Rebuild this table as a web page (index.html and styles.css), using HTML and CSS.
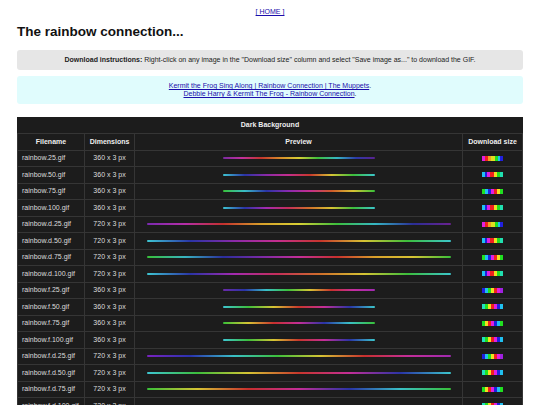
FILE: index.html
```html
<!DOCTYPE html>
<html lang="en">
<head>
  <meta charset="UTF-8">
  <meta name="viewport" content="width=device-width, initial-scale=1.0">
  <title>The rainbow connection...</title>
  <link rel="stylesheet" href="styles.css">
</head>
<body>
  <p class="nav"><a href="#">[ HOME ]</a></p>

  <h1>The rainbow connection...</h1>

  <div class="note instructions">
    <strong>Download instructions:</strong> Right-click on any image in the "Download size" column and select "Save image as..." to download the GIF.
  </div>

  <div class="note links">
    <a href="#">Kermit the Frog Sing Along | Rainbow Connection | The Muppets</a>.<br>
    <a href="#">Debbie Harry &amp; Kermit The Frog - Rainbow Connection</a>.
  </div>

  <table class="gallery">
    <tr class="caption-row">
      <th colspan="4">Dark Background</th>
    </tr>
    <tr class="head-row">
      <th class="col-name">Filename</th>
      <th class="col-dim">Dimensions</th>
      <th class="col-preview">Preview</th>
      <th class="col-dl">Download size</th>
    </tr>
    <tr>
      <td>rainbow.25.gif</td><td class="dim">360 x 3 px</td>
      <td class="preview"><div class="line short h25"></div></td>
      <td class="dl"><div class="thumb t25"></div></td>
    </tr>
    <tr>
      <td>rainbow.50.gif</td><td class="dim">360 x 3 px</td>
      <td class="preview"><div class="line short h50"></div></td>
      <td class="dl"><div class="thumb t50"></div></td>
    </tr>
    <tr>
      <td>rainbow.75.gif</td><td class="dim">360 x 3 px</td>
      <td class="preview"><div class="line short h75"></div></td>
      <td class="dl"><div class="thumb t75"></div></td>
    </tr>
    <tr>
      <td>rainbow.100.gif</td><td class="dim">360 x 3 px</td>
      <td class="preview"><div class="line short h100"></div></td>
      <td class="dl"><div class="thumb t50"></div></td>
    </tr>
    <tr>
      <td>rainbow.d.25.gif</td><td class="dim">720 x 3 px</td>
      <td class="preview"><div class="line long d25"></div></td>
      <td class="dl"><div class="thumb t25"></div></td>
    </tr>
    <tr>
      <td>rainbow.d.50.gif</td><td class="dim">720 x 3 px</td>
      <td class="preview"><div class="line long h50"></div></td>
      <td class="dl"><div class="thumb t50"></div></td>
    </tr>
    <tr>
      <td>rainbow.d.75.gif</td><td class="dim">720 x 3 px</td>
      <td class="preview"><div class="line long d75"></div></td>
      <td class="dl"><div class="thumb t75"></div></td>
    </tr>
    <tr>
      <td>rainbow.d.100.gif</td><td class="dim">720 x 3 px</td>
      <td class="preview"><div class="line long h100"></div></td>
      <td class="dl"><div class="thumb t50"></div></td>
    </tr>
    <tr>
      <td>rainbow.f.25.gif</td><td class="dim">360 x 3 px</td>
      <td class="preview"><div class="line short f25"></div></td>
      <td class="dl"><div class="thumb tf25"></div></td>
    </tr>
    <tr>
      <td>rainbow.f.50.gif</td><td class="dim">360 x 3 px</td>
      <td class="preview"><div class="line short f50"></div></td>
      <td class="dl"><div class="thumb tf50"></div></td>
    </tr>
    <tr>
      <td>rainbow.f.75.gif</td><td class="dim">360 x 3 px</td>
      <td class="preview"><div class="line short f75"></div></td>
      <td class="dl"><div class="thumb tf75"></div></td>
    </tr>
    <tr>
      <td>rainbow.f.100.gif</td><td class="dim">360 x 3 px</td>
      <td class="preview"><div class="line short f50"></div></td>
      <td class="dl"><div class="thumb tf50"></div></td>
    </tr>
    <tr>
      <td>rainbow.f.d.25.gif</td><td class="dim">720 x 3 px</td>
      <td class="preview"><div class="line long fd25"></div></td>
      <td class="dl"><div class="thumb tf25"></div></td>
    </tr>
    <tr>
      <td>rainbow.f.d.50.gif</td><td class="dim">720 x 3 px</td>
      <td class="preview"><div class="line long f50"></div></td>
      <td class="dl"><div class="thumb tf50"></div></td>
    </tr>
    <tr>
      <td>rainbow.f.d.75.gif</td><td class="dim">720 x 3 px</td>
      <td class="preview"><div class="line long f75"></div></td>
      <td class="dl"><div class="thumb tf75"></div></td>
    </tr>
    <tr>
      <td>rainbow.f.d.100.gif</td><td class="dim">720 x 3 px</td>
      <td class="preview"><div class="line long fd100"></div></td>
      <td class="dl"><div class="thumb tf50"></div></td>
    </tr>
  </table>
</body>
</html>
```

FILE: styles.css
```css
body {
  font-family: "Liberation Sans", Arial, sans-serif;
  font-size: 7px;
  line-height: 8px;
  margin: 0;
  padding: 0 17px 20px;
  background-color: #fff;
  color: #222;
}
a {
  color: #1a0dab;
}
.nav {
  text-align: center;
  margin: 0;
  padding-top: 8px;
}
h1 {
  font-size: 13.5px;
  line-height: 16px;
  margin: 8px 0 10px;
  color: #111;
}
.note {
  text-align: center;
  border-radius: 3px;
  padding: 6px;
}
.instructions {
  background-color: #e6e6e6;
  margin-bottom: 6px;
}
.links {
  background-color: #e0fcfd;
  margin-bottom: 13px;
}
.links a {
  color: #1a0dab;
}

/* table */
.gallery {
  width: 100%;
  border-collapse: collapse;
  background-color: #1c1c1c;
  color: #ddd;
}
.gallery th, .gallery td {
  border: 1px solid #353535;
  padding: 0 4px;
  line-height: 8px;
}
.gallery th {
  color: #eee;
  font-weight: bold;
  text-align: center;
}
.caption-row th {
  border-left: none;
  border-right: none;
  border-top: none;
}
.caption-row, .head-row {
  height: 16px;
}
.gallery tr {
  height: 16.5px;
}
.col-name { width: 58px; }
.col-dim { width: 41px; }
.col-dl { width: 51px; }
.dim {
  text-align: center;
}
.preview, .dl {
  text-align: center;
}
.line {
  height: 2px;
  margin: 0 auto;
  border-radius: 1px;
}
.line.short { width: 152px; }
.line.long { width: 304px; }
.thumb {
  width: 21px;
  height: 5px;
  margin: 0 auto;
}

/* preview gradients */
.h25 { background: linear-gradient(to right, #7a2aa0, #c2309c, #c4352e, #d88a2a, #d8cf35, #3cbf3c, #36b7c4, #2c3aa8, #5a2290); }
.h50 { background: linear-gradient(to right, #3ec6d2, #2a34a6, #8a2aa8, #c42e8e, #c8362c, #d6c434, #3cbe3c, #3cc6cc); }
.h75 { background: linear-gradient(to right, #38c038, #3abcc6, #2a34a6, #8a2ab0, #c42e8e, #cf5a2a, #d6c434, #38c038); }
.h100 { background: linear-gradient(to right, #3ec6d2, #2a34a6, #a42ab0, #c42e5a, #d0702a, #d6c434, #3cbe3c, #3cc6cc); }
.d25 { background: linear-gradient(to right, #7a2ab0, #b52ea8, #c4302e, #d8a02a, #d8d035, #3cbf3c, #36b7c4, #2a2e96, #6a2290); }
.d75 { background: linear-gradient(to right, #38c038, #38b4c0, #2a2e9c, #7a2aa8, #c42e98, #c8302e, #d8a02a, #d6c434, #38c038); }
.f25 { background: linear-gradient(to right, #6a2aa8, #2a34a6, #3ac0c6, #3cc03c, #d6c434, #c8302e, #c42ea0, #a02ab0); }
.f50 { background: linear-gradient(to right, #3ec6d2, #3cbe3c, #d6c434, #c8362c, #c42e98, #2a34a6, #3cc6cc); }
.f75 { background: linear-gradient(to right, #38c038, #d6c434, #c8302e, #c42e98, #2a34a6, #3ac0c6, #38c038); }
.fd25 { background: linear-gradient(to right, #7a22c0, #2a34b0, #3ac0c6, #3cc03c, #d6c434, #c8302e, #c42e98, #a02ab0); }
.fd100 { background: linear-gradient(to right, #3ec6e0, #3cbe3c, #d6c434, #d2702a, #c42e98, #8a2aa8, #2a34a6, #3ec6e0); }

/* download thumbs */
.t25 { background: linear-gradient(to right, #e020e0 0 15%, #f02020 15% 30%, #f0a020 30% 45%, #e0e020 45% 60%, #20e020 60% 75%, #20c0f0 75% 88%, #2020e0 88%); }
.t50 { background: linear-gradient(to right, #20c0f0 0 12%, #2020e0 12% 25%, #e020e0 25% 40%, #f02020 40% 55%, #f0e020 55% 70%, #20e020 70% 85%, #20e0b0 85%); }
.t75 { background: linear-gradient(to right, #20e020 0 14%, #20c0f0 14% 28%, #2020e0 28% 42%, #e020e0 42% 56%, #f02020 56% 70%, #f0e020 70% 85%, #20e020 85%); }
.tf25 { background: linear-gradient(to right, #2020e0 0 14%, #20c0f0 14% 28%, #20e020 28% 44%, #f0e020 44% 58%, #f02020 58% 72%, #e020e0 72% 88%, #a020e0 88%); }
.tf50 { background: linear-gradient(to right, #20e0c0 0 14%, #20e020 14% 28%, #f0e020 28% 42%, #f02020 42% 56%, #e020e0 56% 70%, #2020e0 70% 85%, #20c0f0 85%); }
.tf75 { background: linear-gradient(to right, #20e020 0 14%, #f0e020 14% 28%, #f02020 28% 42%, #e020e0 42% 56%, #2020e0 56% 70%, #20c0f0 70% 85%, #20e020 85%); }
```
